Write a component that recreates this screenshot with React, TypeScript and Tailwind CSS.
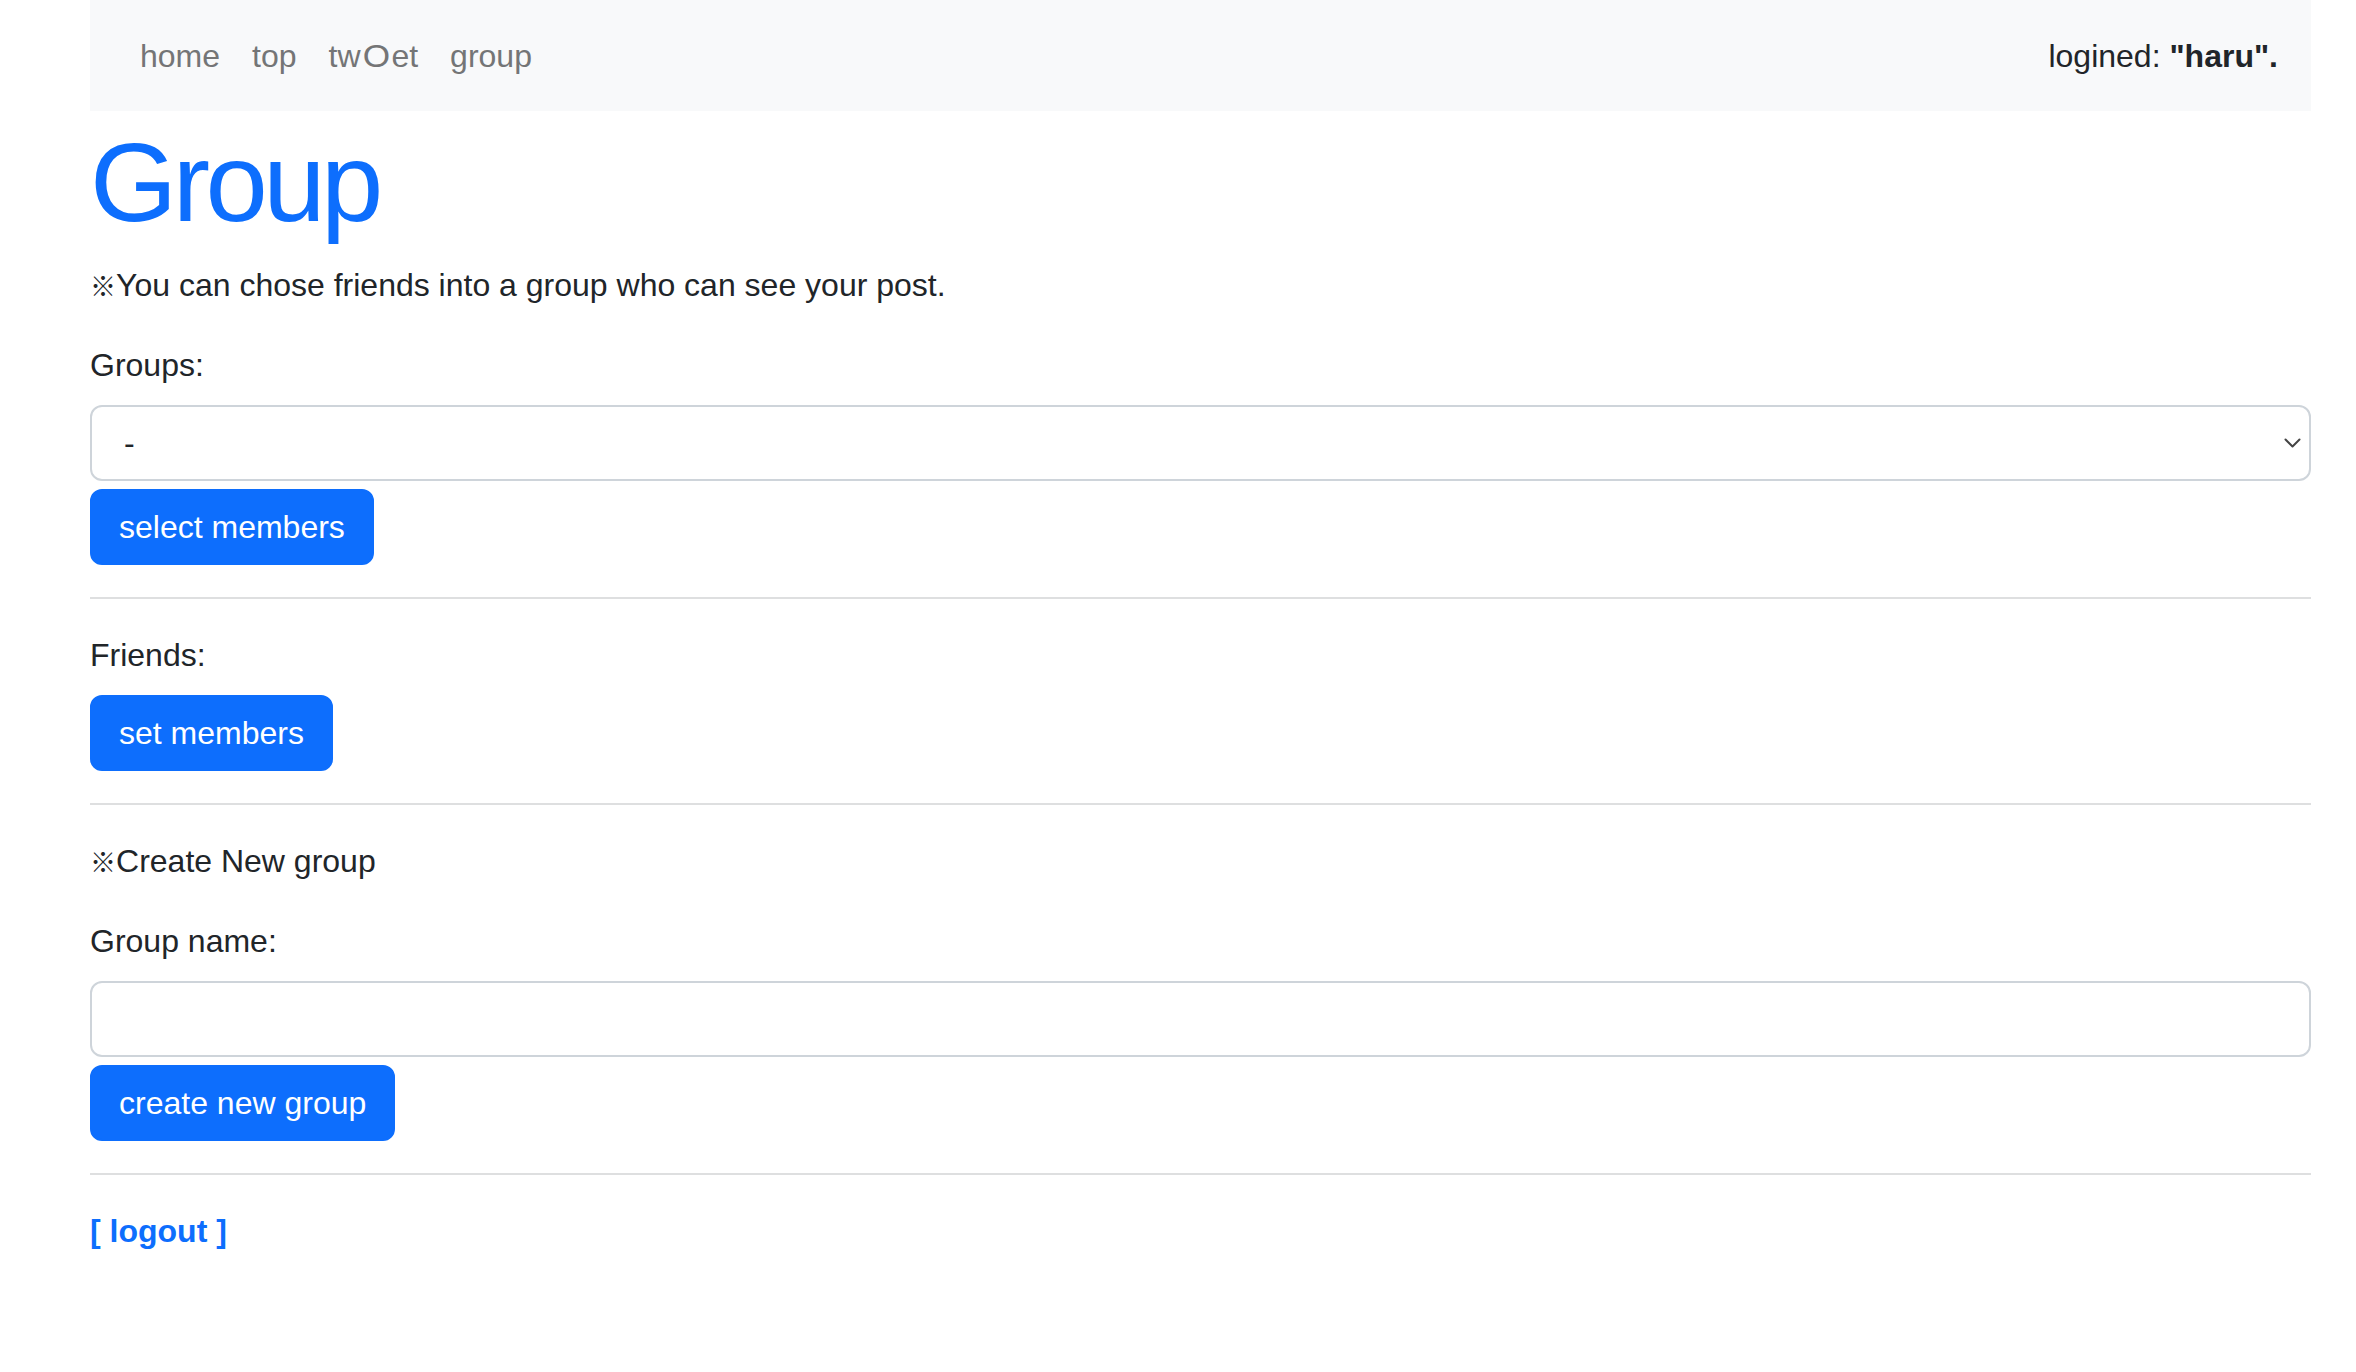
import React from "react";

const font = "font-['Liberation_Sans','Helvetica_Neue',Arial,'Noto_Sans_CJK_JP',sans-serif]";

function Chevron() {
  return (
    <svg width="17" height="10" viewBox="0 0 17 10" fill="none" className="absolute right-[8px] top-1/2 -translate-y-1/2">
      <path d="M1.5 1.5 L8.5 8.5 L15.5 1.5" stroke="#444" strokeWidth="2" strokeLinecap="round" strokeLinejoin="round" />
    </svg>
  );
}

function Btn({ children, top = true }: { children: React.ReactNode; top?: boolean }) {
  return (
    <button
      className={`${top ? "mt-[8px]" : "mt-0"} h-[76px] rounded-[12px] border-2 border-[#0d6efd] bg-[#0d6efd] px-[27px] text-[32px] leading-[48px] text-white`}
    >
      {children}
    </button>
  );
}

function Hr() {
  return <div className="my-[32px] h-[2px] w-full bg-[#dedfe0]" />;
}

function Mark() {
  return <span className="text-[26px] font-['Noto_Sans_CJK_JP',sans-serif]">※</span>;
}

export default function App() {
  return (
    <div className={`min-h-screen bg-white pl-[90px] pr-[45px] text-[#212529] ${font}`}>
      <nav className="flex h-[111px] items-center justify-between bg-[#f8f9fa] pl-[34px] pr-[33px]">
        <div className="flex">
          <a className="px-[16px] text-[32px] leading-[48px] text-[#747576]">home</a>
          <a className="px-[16px] text-[32px] leading-[48px] text-[#747576]">top</a>
          <a className="px-[16px] text-[32px] leading-[48px] text-[#747576]">
            tw<span className="mx-[3px] inline-block scale-x-110">O</span>et
          </a>
          <a className="px-[16px] text-[32px] leading-[48px] text-[#747576]">group</a>
        </div>
        <div className="text-[32px] leading-[48px] text-[#212529]">
          logined: <b>"haru".</b>
        </div>
      </nav>

      <h1 className="mt-[5px] mb-[11px] text-[112px] leading-[134px] tracking-[-0.04em] text-[#0d6efd]">Group</h1>

      <p className="mb-[32px] text-[32px] leading-[48px]">
        <Mark />You can chose friends into a group who can see your post.
      </p>

      <div className="mb-[16px] text-[32px] leading-[48px]">Groups:</div>
      <div className="relative h-[76px] w-full rounded-[12px] border-2 border-[#ced4da] bg-white">
        <div className="pl-[32px] text-[32px] leading-[72px]">-</div>
        <Chevron />
      </div>
      <Btn>select members</Btn>

      <Hr />

      <div className="mb-[16px] text-[32px] leading-[48px]">Friends:</div>
      <Btn top={false}>set members</Btn>

      <Hr />

      <p className="mb-[32px] text-[32px] leading-[48px]">
        <Mark />Create New group
      </p>

      <div className="mb-[16px] text-[32px] leading-[48px]">Group name:</div>
      <div className="h-[76px] w-full rounded-[12px] border-2 border-[#ced4da] bg-white" />
      <Btn>create new group</Btn>

      <Hr />

      <a className="text-[32px] font-bold leading-[48px] text-[#0d6efd]">[ logout ]</a>
    </div>
  );
}
